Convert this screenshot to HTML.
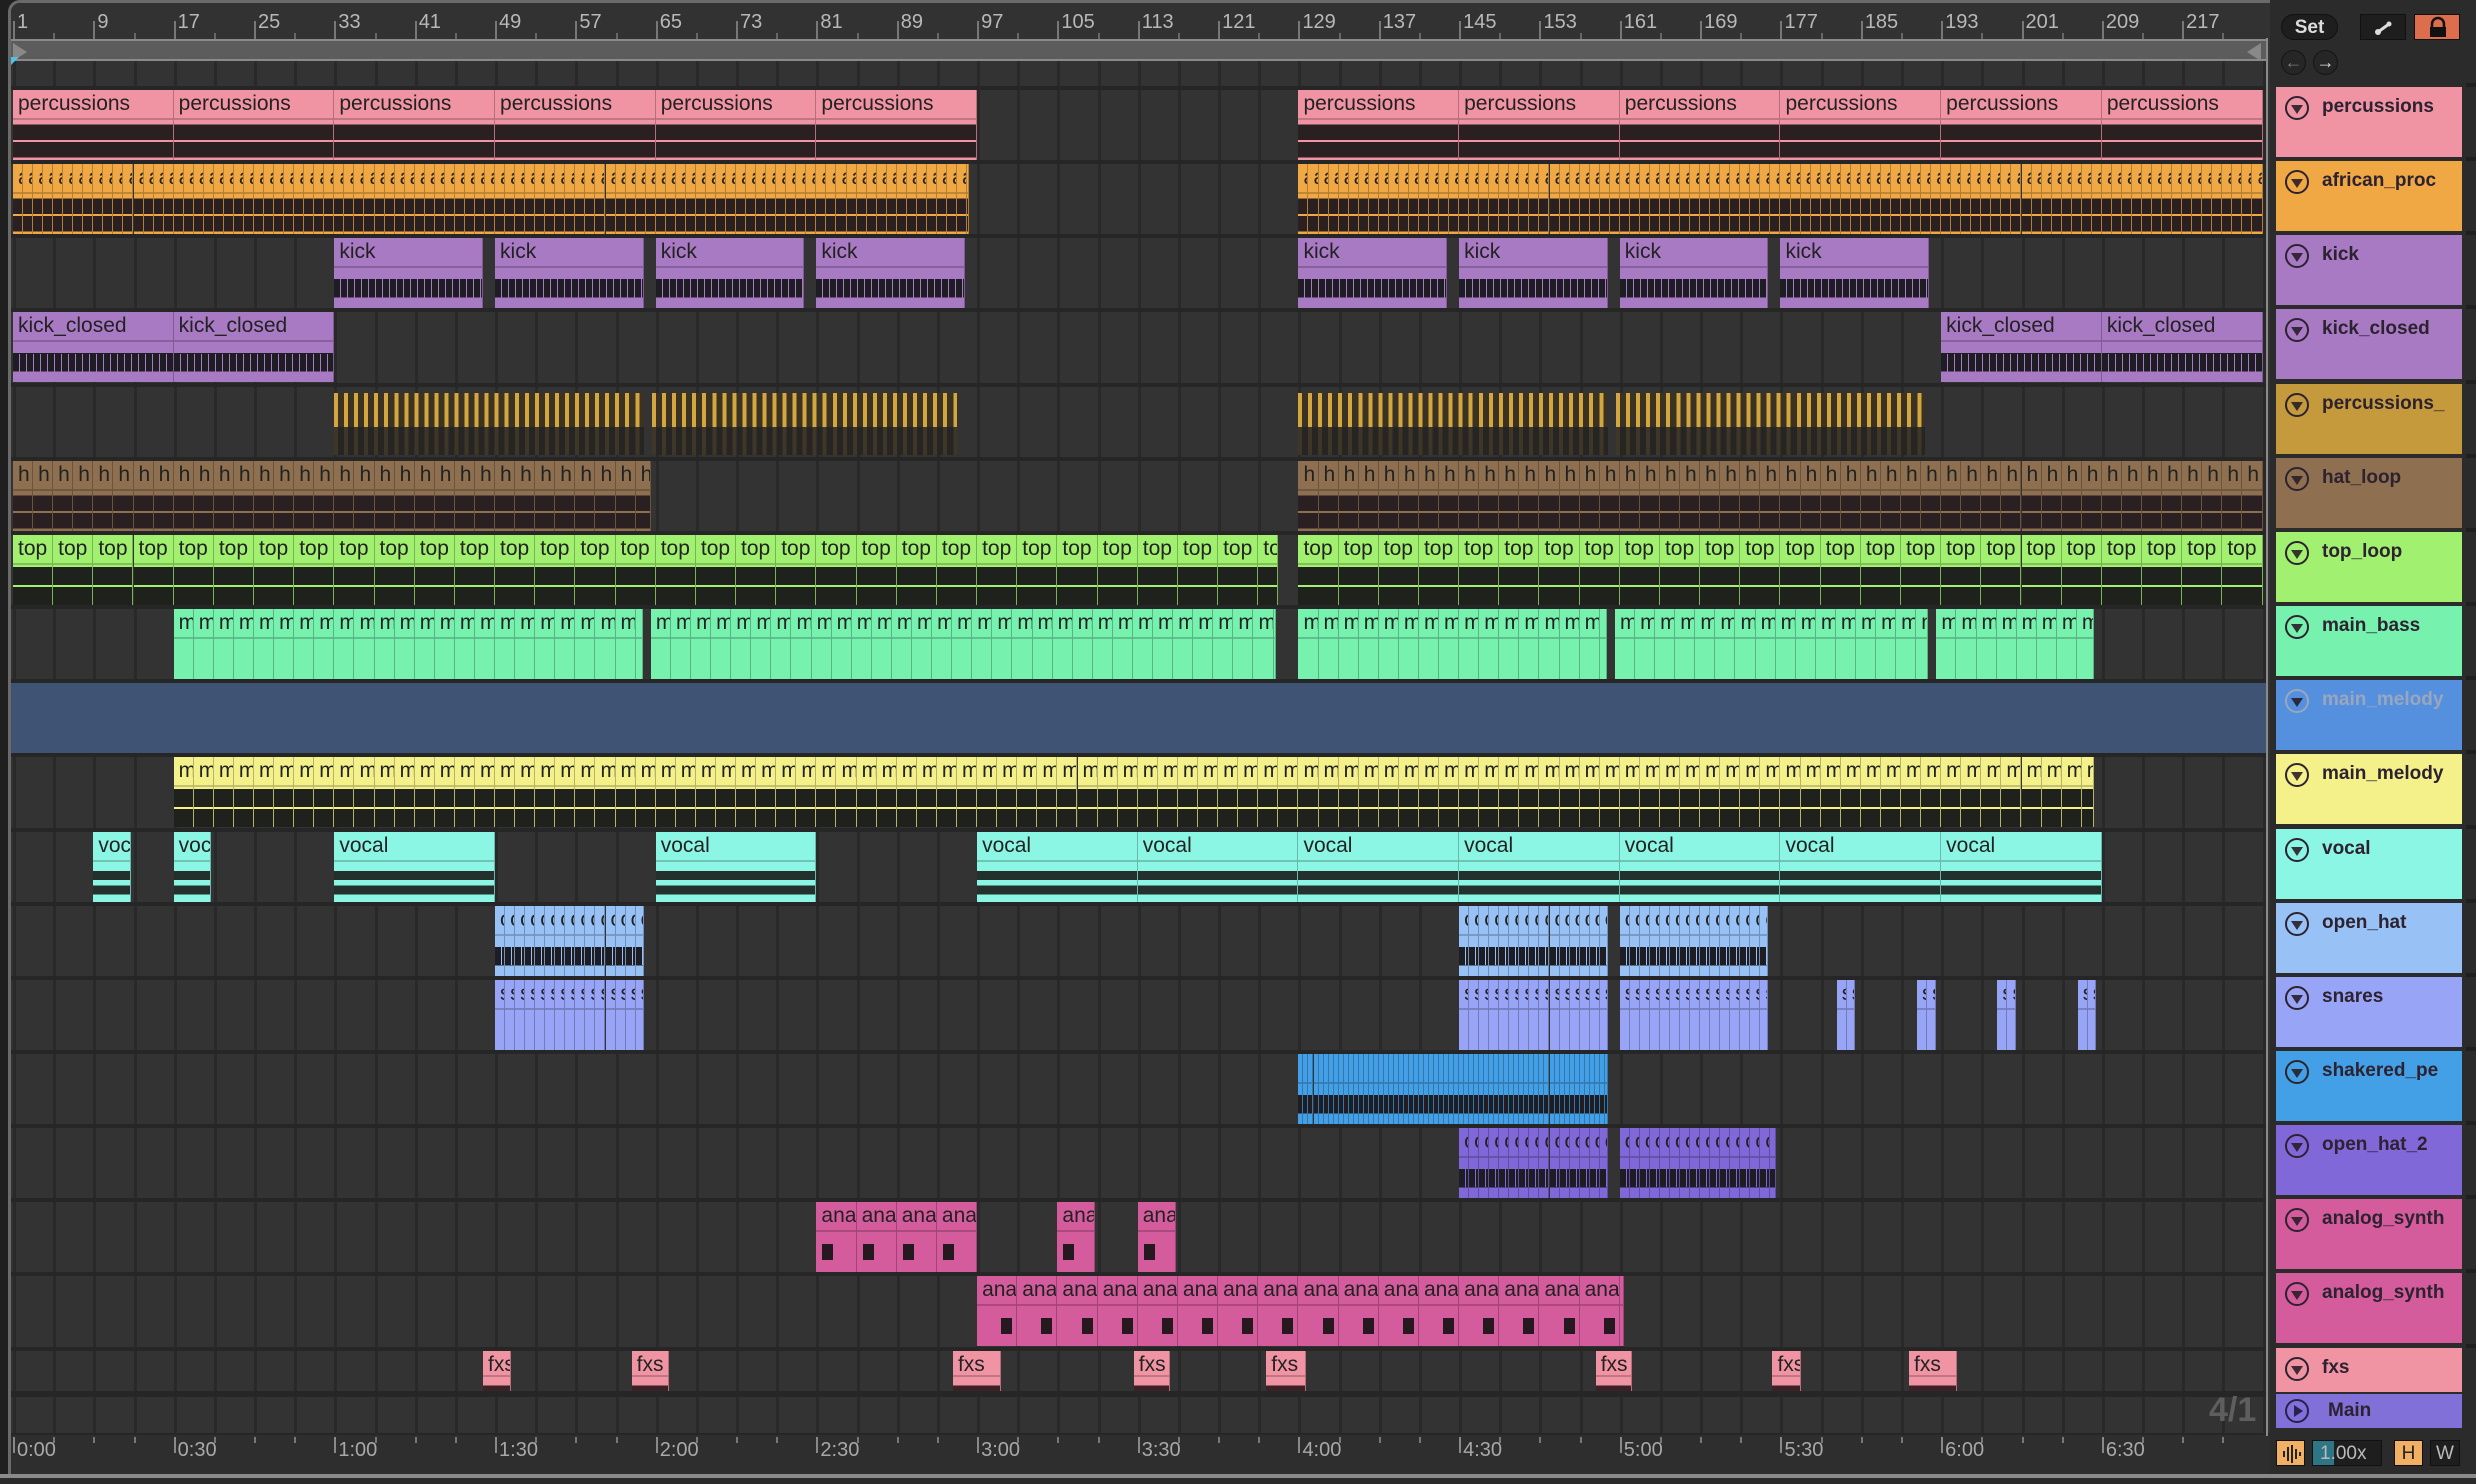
<!DOCTYPE html>
<html><head><meta charset="utf-8">
<style>
*{margin:0;padding:0;box-sizing:border-box}
body{width:2476px;height:1484px;background:#1f1f1f;overflow:hidden;position:relative;font-family:"Liberation Sans",sans-serif}
.abs{position:absolute}
#arr{position:absolute;left:8px;top:0;width:2262px;height:1476px;background:#333;border-left:3px solid #6a6a6a;border-top:3px solid #6a6a6a;border-radius:12px 0 0 0;overflow:hidden}
.hdr{position:absolute;left:2276px;width:186px;font-weight:bold;font-size:19px;color:#2c2230}
.hdr .ic{position:absolute;left:9px;top:9px;width:24px;height:24px;border:2px solid rgba(40,30,40,.85);border-radius:50%}
.hdr .ic:after{content:"";position:absolute;left:4px;top:7px;border-left:6px solid transparent;border-right:6px solid transparent;border-top:9px solid rgba(40,30,40,.9)}
.hdr .ic.play:after{left:7px;top:4px;border-top:6px solid transparent;border-bottom:6px solid transparent;border-left:9px solid #2a2050;border-right:0}
.hdr span{position:absolute;left:46px;top:9px;white-space:nowrap}
</style></head><body>
<div id="arr"></div>
<div class="abs" style="left:2270px;top:0;width:206px;height:1484px;background:#2b2b2b"></div>
<div id="hdrs"></div>
<script>
const A=document.getElementById('arr');
const OX=8+3;
const SEG=80.34, X0=13;
function X(b){return X0+(b-1)*SEG/8;}
function S(s){return X0+s*SEG;}
function add(p,html,st){const d=document.createElement('div');d.style.cssText=st;if(html)d.innerHTML=html;p.appendChild(d);return d;}
add(A,'','position:absolute;left:0;top:0;width:100%;height:36px;background:#323232');
add(A,'','position:absolute;left:0;top:36px;width:2256px;height:22px;background:#5c5c5c;border-top:2px solid #8a8a8a;border-bottom:2px solid #8a8a8a');
add(A,'','position:absolute;left:2px;top:40px;width:0;height:0;border-top:9px solid transparent;border-bottom:9px solid transparent;border-left:14px solid #888');
add(A,'','position:absolute;left:2236px;top:40px;width:0;height:0;border-top:9px solid transparent;border-bottom:9px solid transparent;border-right:14px solid #888');
for(let b=1;b<=217;b+=8){const x=X(b)-OX;add(A,''+b,'position:absolute;top:8px;left:'+(x+4)+'px;font-size:20px;color:#b8b8b8');add(A,'','position:absolute;top:18px;left:'+x+'px;width:2px;height:18px;background:#777');add(A,'','position:absolute;top:30px;left:'+(x+SEG/2)+'px;width:2px;height:6px;background:#666');}
const grid=add(A,'','position:absolute;left:0;top:58px;width:2256px;height:1376px');
for(let k=0;k<60;k++){const x=X(1+4*k)-OX;if(x>2256)break;add(grid,'','position:absolute;top:0;bottom:0;left:'+x+'px;width:3px;background:#292929');}
add(A,'','position:absolute;left:0;top:54px;width:0;height:0;border-left:8px solid #4cc3e0;border-bottom:8px solid transparent');
const T=[
['percussions','#f094a4','audio',16,[[0,2],[2,4],[4,6],[6,8],[8,10],[10,12],[16,18],[18,20],[20,22],[22,24],[24,26],[26,28]],'percussions'],
['african_proc','#f0a844','audio',1,[[0,4],[4,11.9],[16,20],[20,28]],'a'],
['kick','#a97ac4','midi',15,[[4,5.85],[6,7.85],[8,9.85],[10,11.85],[16,17.85],[18,19.85],[20,21.85],[22,23.85]],'kick'],
['kick_closed','#a97ac4','midi',16,[[0,2],[2,4],[24,26],[26,28]],'kick_closed'],
['percussions_','#c49a3c','stripe',0,[[4,7.85],[7.95,11.75],[16,19.85],[19.95,23.8]],''],
['hat_loop','#8e7050','audio',2,[[0,4],[4,7.94],[16,20],[20,28]],'h'],
['top_loop','#a2f070','dark',4,[[0,4],[4,15.75],[16,20],[20,28]],'top'],
['main_bass','#76f2ae','light',2,[[2,7.84],[7.94,15.72],[16,19.84],[19.94,23.84],[23.94,25.9]],'m'],
['main_melody','#5590de','sel',0,[],''],
['main_melody','#f4f08a','dark',2,[[2,25.9]],'m'],
['vocal','#8cf6e4','vocal',16,[[1,1.47],[2,2.47],[4,6],[8,10],[12,14],[14,16],[16,18],[18,20],[20,22],[22,24],[24,26]],'vocal'],
['open_hat','#98c2f6','midi',1,[[6,7.85],[18,19.85],[20,21.85]],'o'],
['snares','#98a4f6','light2',1,[[6,7.85],[18,19.85],[20,21.85],[22.7,22.93],[23.7,23.93],[24.7,24.93],[25.7,25.93]],'sı'],
['shakered_pe','#44a0e6','midi',0.5,[[16,19.85]],'s'],
['open_hat_2','#8068d8','midi',1,[[18,19.85],[20,21.95]],'o'],
['analog_synth','#d45c9c','ana',4,[[10,12],[13,13.47],[14,14.47]],'ana'],
['analog_synth','#d45c9c','ana',4,[[12,20.05]],'ana'],
['fxs','#f094a4','fx',0,[[5.85,6.2],[7.7,8.17],[11.7,12.3],[13.95,14.4],[15.6,16.1],[19.7,20.15],[21.9,22.25],[23.6,24.2]],'fxs']
];
function body(st,c){
 switch(st){
 case 'audio':return 'background:linear-gradient(to bottom,'+c+' 0 6%,#2a2022 6% 47%,'+c+' 47% 53%,#2a2022 53% 94%,'+c+' 94%)';
 case 'dark':return 'background:linear-gradient(to bottom,#1e211c 0 48%,'+c+' 48% 52%,#1e211c 52% 100%)';
 case 'midi':return 'background:linear-gradient(to bottom,'+c+' 0 24%,#1f1d24 24% 72%,'+c+' 72%)';
 case 'light':case 'light2':case 'ana':return 'background:'+c;
 case 'vocal':return 'background:linear-gradient(to bottom,'+c+' 0 18%,#23302c 18% 42%,'+c+' 42% 56%,#23302c 56% 80%,'+c+' 80%)';
 case 'fx':return 'background:linear-gradient(to bottom,'+c+' 0 40%,#3a2226 40%)';
 }
}
const H=document.getElementById('hdrs');
T.forEach((t,i)=>{
 const [name,c,st,sub,rs,lab]=t;
 const top=87+i*74.15;
 const h=(i==17)?44:70;
 add(A,'','position:absolute;left:0;width:2256px;top:'+(top-4)+'px;height:4px;background:#262626');
 if(st=='sel'){add(A,'','position:absolute;left:0;width:2256px;top:'+top+'px;height:70px;background:#3f5475');}
 rs.forEach(r=>{
  const x0=S(r[0])-OX,x1=S(r[1])-OX;
  if(st=='stripe'){add(A,'','position:absolute;left:'+x0+'px;width:'+(x1-x0)+'px;top:'+(top+6)+'px;height:62px;background:linear-gradient(to bottom,transparent 0 55%,rgba(35,35,35,.85) 55%),repeating-linear-gradient(90deg,#d4a640 0 4px,#3a3222 4px '+(SEG/8)+'px)');return;}
  const step=(sub?sub*SEG/8:(x1-x0));
  for(let x=x0;x<x1-1;x+=step){
   const w=Math.min(step,x1-x);
   const d=add(A,'','position:absolute;left:'+x+'px;width:'+w+'px;top:'+top+'px;height:'+h+'px;overflow:hidden;border-right:1px solid rgba(0,0,0,.25);background:'+c);
   add(d,lab,'position:absolute;left:0;right:0;top:0;height:'+(i==17?26:30)+'px;font-size:21px;color:#222;padding:2px 0 0 5px;white-space:nowrap;overflow:hidden;background:'+c+';border-bottom:2px solid rgba(0,0,0,.2)');
   const b=add(d,'','position:absolute;left:0;right:0;top:'+(i==17?28:32)+'px;bottom:0;'+body(st,c));
   if(st=='ana'){add(b,'','position:absolute;left:'+(i==16?w-16:6)+'px;top:10px;width:11px;height:16px;background:#26181f');}
   if(st=='midi'){add(b,'','position:absolute;left:0;right:0;top:24%;height:48%;background:repeating-linear-gradient(90deg,transparent 0 6px,'+c+' 6px 7px)');}
  }
 });
 const hc=(st=='sel')?'#9aa6bd':'#2c2230';
 const hh=add(H,'<div class="ic" style="border-color:'+hc+'"></div><span style="color:'+hc+'">'+name+'</span>','top:'+top+'px;height:'+h+'px;background:'+c);
 hh.className='hdr';
 add(document.body,'','position:absolute;left:2466px;width:10px;top:'+(top-4)+'px;height:4px;background:#1f1f1f');
});
add(A,'','position:absolute;left:0;width:2256px;top:1388px;height:6px;background:#262626');
add(A,'4/1','position:absolute;left:2198px;top:1388px;font-size:34px;font-weight:bold;color:#5e5e5e');
const mh=add(H,'<div class="ic play" style="border-color:#2a2050"></div><span style="left:52px">Main</span>','top:1394px;height:34px;background:#8070d8');
mh.className='hdr';
mh.querySelector('.ic').style.top='5px';mh.querySelector('span').style.top='6px';
add(document.body,'','position:absolute;left:2266px;top:38px;width:2px;height:1398px;background:#8a8a8a');
add(A,'','position:absolute;left:0;top:1430px;width:100%;height:46px;background:#2e2e2e;border-top:2px solid #262626');
const times=['0:00','0:30','1:00','1:30','2:00','2:30','3:00','3:30','4:00','4:30','5:00','5:30','6:00','6:30'];
times.forEach((t,k)=>{const x=S(2*k)-OX;add(A,'','position:absolute;left:'+x+'px;top:1434px;width:2px;height:16px;background:#888');add(A,t,'position:absolute;left:'+(x+4)+'px;top:1436px;font-size:20px;color:#a8a8a8');
 for(let j=1;j<4;j++)add(A,'','position:absolute;left:'+(x+j*SEG/2)+'px;top:1434px;width:2px;height:6px;background:#777');});
add(document.body,'','position:absolute;left:0;top:1474px;width:2476px;height:4px;background:#8a8a8a');
add(document.body,'','position:absolute;left:0;top:1478px;width:2476px;height:6px;background:#2a2a2a');
</script>
<div class="abs" style="left:2281px;top:14px;width:57px;height:26px;border-radius:13px;background:#1e1e1e;border:1px solid #111;color:#ddd;font-weight:bold;font-size:19px;text-align:center;line-height:25px;font-family:'Liberation Sans',sans-serif">Set</div>
<div class="abs" style="left:2360px;top:14px;width:46px;height:26px;background:#1e1e1e;border:1px solid #111"><svg width="46" height="26"><line x1="17" y1="17" x2="28" y2="9" stroke="#ddd" stroke-width="3"/><circle cx="17" cy="17" r="3" fill="#ddd"/><circle cx="28" cy="9" r="2.5" fill="#ddd"/></svg></div>
<div class="abs" style="left:2414px;top:14px;width:46px;height:26px;background:#dc6e4e;border:1px solid #111"><svg width="46" height="26"><path d="M17 12 v-3 a6 6 0 0 1 12 0 v3" stroke="#111" stroke-width="2.5" fill="none"/><rect x="15" y="12" width="16" height="10" fill="#111"/></svg></div>
<div class="abs" style="left:2281px;top:50px;width:25px;height:25px;border-radius:50%;background:#262626;border:1px solid #151515;color:#777;font-size:18px;text-align:center;line-height:23px">&#8592;</div>
<div class="abs" style="left:2313px;top:50px;width:25px;height:25px;border-radius:50%;background:#262626;border:1px solid #151515;color:#ddd;font-size:18px;text-align:center;line-height:23px;font-weight:bold">&#8594;</div>
<div class="abs" style="left:2276px;top:1440px;width:29px;height:26px;background:#f2b064;border:1px solid #111"><svg width="29" height="26"><g stroke="#222" stroke-width="2"><line x1="7" y1="10" x2="7" y2="16"/><line x1="11" y1="6" x2="11" y2="20"/><line x1="15" y1="4" x2="15" y2="22"/><line x1="19" y1="8" x2="19" y2="18"/><line x1="23" y1="11" x2="23" y2="15"/></g></svg></div>
<div class="abs" style="left:2312px;top:1440px;width:70px;height:26px;background:#1e1e1e;border:1px solid #111;overflow:hidden"><div class="abs" style="left:0;top:0;width:21px;height:26px;background:#2e7585"></div><div class="abs" style="left:7px;top:2px;font-size:19px;color:#bbb">1.00x</div></div>
<div class="abs" style="left:2394px;top:1440px;width:29px;height:26px;background:#f2b064;border:1px solid #111;font-size:19px;text-align:center;line-height:25px;color:#222">H</div>
<div class="abs" style="left:2430px;top:1440px;width:30px;height:26px;background:#1e1e1e;border:1px solid #111;font-size:19px;text-align:center;line-height:25px;color:#bbb">W</div>
</body></html>
